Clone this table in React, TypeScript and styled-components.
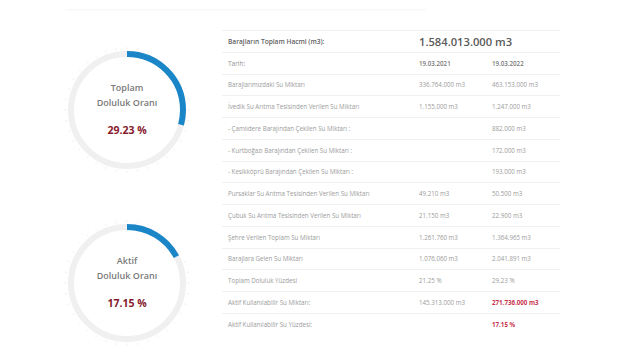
import React from "react";
import styled, { createGlobalStyle } from "styled-components";

const Global = createGlobalStyle`
  html, body { margin: 0; padding: 0; background: #ffffff; }
  body { font-family: "Open Sans", "Noto Sans", Arial, sans-serif; -webkit-font-smoothing: antialiased; }
`;

const Page = styled.div`
  width: 640px;
  height: 364px;
  overflow: hidden;
  padding-top: 9px;
  box-sizing: border-box;
`;

const TopShade = styled.div`
  margin-left: 67px;
  width: 360px;
  height: 1px;
  background: #f6f6f6;
  box-shadow: 0 1px 2px rgba(0, 0, 0, 0.025);
`;

const Main = styled.div`
  display: flex;
  margin-top: 20px;
  margin-left: 62px;
  gap: 30px;
`;

const GaugeColumn = styled.div`
  display: flex;
  flex-direction: column;
  gap: 43px;
  padding-top: 15px;
  width: 130px;
`;

const GaugeBox = styled.div`
  display: grid;
  width: 130px;
  height: 130px;
  & > * { grid-area: 1 / 1; }
`;

const GaugeText = styled.div`
  display: flex;
  flex-direction: column;
  align-items: center;
  justify-content: center;
  padding-bottom: 4px;
  text-align: center;
`;

const GaugeTitle = styled.div`
  font-size: 9px;
  font-weight: 600;
  line-height: 15px;
  color: #7a7a7a;
`;

const GaugeValue = styled.div`
  margin-top: 13px;
  font-size: 10.5px;
  font-weight: 700;
  line-height: 14px;
  color: #86192c;
`;

const Table = styled.div`
  width: 338px;
  display: flex;
  flex-direction: column;
  border-top: 1px solid #f0f0f0;
`;

const Row = styled.div<{ $last?: boolean }>`
  display: grid;
  grid-template-columns: 191px 73px 1fr;
  align-items: center;
  height: 21.75px;
  box-sizing: border-box;
  padding-left: 6px;
  border-bottom: ${(p) => (p.$last ? "none" : "1px solid #f0f0f0")};
`;

const Cell = styled.div<{ $weight?: number; $color?: string; $size?: number }>`
  font-size: ${(p) => p.$size ?? 6.2}px;
  font-weight: ${(p) => p.$weight ?? 400};
  color: ${(p) => p.$color ?? "#9b9b9b"};
  white-space: nowrap;
`;

const TotalValue = styled.div`
  grid-column: 2 / 4;
  font-size: 11.2px;
  font-weight: 600;
  color: #5a5a5a;
  white-space: nowrap;
`;

const Gauge: React.FC<{ pct: number; title: string; value: string }> = ({ pct, title, value }) => {
  const r = 56;
  const c = 2 * Math.PI * r;
  const ticks = Array.from({ length: 36 }, (_, i) => (i * 360) / 36);
  return (
    <GaugeBox>
      <svg width="130" height="130" viewBox="0 0 130 130">
        {ticks.map((a) => {
          const rad = (a * Math.PI) / 180;
          const x1 = 65 + 60.5 * Math.sin(rad);
          const y1 = 65 - 60.5 * Math.cos(rad);
          const x2 = 65 + 63 * Math.sin(rad);
          const y2 = 65 - 63 * Math.cos(rad);
          return <line key={a} x1={x1} y1={y1} x2={x2} y2={y2} stroke="#ececec" strokeWidth="0.8" />;
        })}
        <circle cx="65" cy="65" r={r} fill="none" stroke="#f0f0f0" strokeWidth="6" />
        <circle
          cx="65"
          cy="65"
          r={r}
          fill="none"
          stroke="#1a86c8"
          strokeWidth="6"
          strokeDasharray={`${(c * pct) / 100} ${c}`}
          transform="rotate(-90 65 65)"
        />
      </svg>
      <GaugeText>
        {title.split("\n").map((t) => (
          <GaugeTitle key={t}>{t}</GaugeTitle>
        ))}
        <GaugeValue>{value}</GaugeValue>
      </GaugeText>
    </GaugeBox>
  );
};

type R = { label: string; a?: string; b?: string; red?: boolean };

const rows: R[] = [
  { label: "Barajlarımızdaki Su Miktarı", a: "336.764.000 m3", b: "463.153.000 m3" },
  { label: "İvedik Su Arıtma Tesisinden Verilen Su Miktarı", a: "1.155.000 m3", b: "1.247.000 m3" },
  { label: "- Çamlıdere Barajından Çekilen Su Miktarı :", b: "882.000 m3" },
  { label: "- Kurtboğazı Barajından Çekilen Su Miktarı :", b: "172.000 m3" },
  { label: "- Kesikköprü Barajından Çekilen Su Miktarı :", b: "193.000 m3" },
  { label: "Pursaklar Su Arıtma Tesisinden Verilen Su Miktarı", a: "49.210 m3", b: "50.500 m3" },
  { label: "Çubuk Su Arıtma Tesisinden Verilen Su Miktarı", a: "21.150 m3", b: "22.900 m3" },
  { label: "Şehre Verilen Toplam Su Miktarı", a: "1.261.760 m3", b: "1.364.965 m3" },
  { label: "Barajlara Gelen Su Miktarı", a: "1.076.060 m3", b: "2.041.891 m3" },
  { label: "Toplam Doluluk Yüzdesi", a: "21.25 %", b: "29.23 %" },
  { label: "Aktif Kullanılabilir Su Miktarı:", a: "145.313.000 m3", b: "271.736.000 m3", red: true },
  { label: "Aktif Kullanılabilir Su Yüzdesi:", b: "17.15 %", red: true },
];

export default function App() {
  return (
    <Page>
      <Global />
      <TopShade />
      <Main>
        <GaugeColumn>
          <Gauge pct={29.23} title={"Toplam\nDoluluk Oranı"} value="29.23 %" />
          <Gauge pct={17.15} title={"Aktif\nDoluluk Oranı"} value="17.15 %" />
        </GaugeColumn>
        <Table>
          <Row>
            <Cell $size={6.6} $weight={600} $color="#5f5f5f">Barajların Toplam Hacmi (m3):</Cell>
            <TotalValue>1.584.013.000 m3</TotalValue>
          </Row>
          <Row>
            <Cell $size={6.5} $color="#8f8f8f">Tarih:</Cell>
            <Cell $weight={600} $color="#7a7a7a">19.03.2021</Cell>
            <Cell $weight={600} $color="#7a7a7a">19.03.2022</Cell>
          </Row>
          {rows.map((r, i) => (
            <Row key={r.label} $last={i === rows.length - 1}>
              <Cell>{r.label}</Cell>
              <Cell>{r.a ?? ""}</Cell>
              <Cell $weight={r.red ? 700 : 400} $color={r.red ? "#c9344d" : "#9b9b9b"}>
                {r.b ?? ""}
              </Cell>
            </Row>
          ))}
        </Table>
      </Main>
    </Page>
  );
}
